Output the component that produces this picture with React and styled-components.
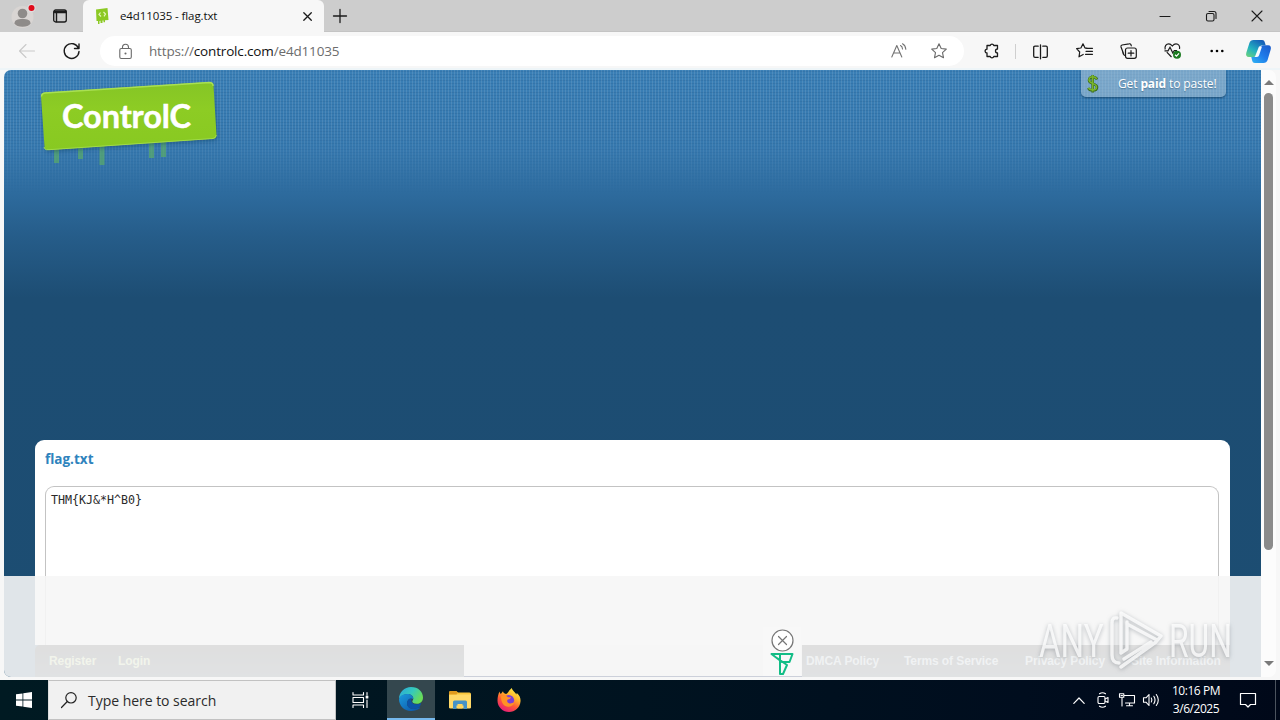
import React from "react";
import styled, { createGlobalStyle, css } from "styled-components";

const ui = '"Open Sans", "Noto Sans", sans-serif';

const GlobalStyle = createGlobalStyle`
  * { box-sizing: border-box; }
  body { margin: 0; background: #f7f7f7; overflow: hidden; font-family: ${ui}; }
  svg { display: block; overflow: visible; }
`;

const Desktop = styled.div`
  width: 1280px;
  height: 720px;
  display: flex;
  flex-direction: column;
`;
const Browser = styled.div`
  height: 680px;
  display: flex;
  flex-direction: column;
  background: #f7f7f7;
`;
const Slot = styled.div`
  width: ${(p) => p.$w}px;
  height: ${(p) => p.$h || 32}px;
  flex: none;
  display: flex;
  align-items: center;
  justify-content: center;
`;
const Spacer = styled.div`
  flex: 1;
`;

/* Tab strip */
const TabStrip = styled.div`
  height: 32px;
  display: flex;
  background: #cdcdcd;
  border-bottom: 1px solid #c4c4c4;
`;
const StripLeft = styled.div`
  width: 83px;
  height: 32px;
  display: flex;
  border-bottom-right-radius: 5px;
  background: #cdcdcd;
`;
const Tab = styled.div`
  width: 241px;
  height: 32px;
  display: flex;
  align-items: center;
  background: #f7f7f7;
  border-radius: 6px 6px 0 0;
  padding-left: 12px;
`;
const TabTitle = styled.span`
  width: 186px;
  padding-left: 11px;
  font-size: 11.5px;
  line-height: 16px;
  letter-spacing: -0.1px;
  color: #111;
  white-space: nowrap;
`;

/* Toolbar */
const Toolbar = styled.div`
  height: 38px;
  display: flex;
  align-items: center;
  background: #f7f7f7;
  border-bottom: 2px solid #eef5f8;
  padding: 2px 0 0 5px;
`;
const AddressBar = styled.div`
  width: 864px;
  height: 30px;
  margin-left: 7px;
  display: flex;
  align-items: center;
  background: #fff;
  border-radius: 15px;
`;
const LockSlot = styled(Slot)`
  padding-left: 8px;
`;
const Url = styled.span`
  width: 726px;
  padding-left: 6px;
  font-size: 13.5px;
  line-height: 20px;
  letter-spacing: -0.16px;
  color: #6d6d6d;
  white-space: nowrap;
  b { color: #111; font-weight: 400; }
`;
const Divider = styled.div`
  width: 1px;
  height: 15px;
  margin-left: -7px;
  background: #cfcfcf;
`;

/* Page */
const Viewport = styled.div`
  height: 607px;
  margin: 0 4px 0 4px;
  display: flex;
  border-radius: 7px;
  overflow: hidden;
  background: #fcfcfc;
`;
const Page = styled.main`
  position: relative;
  width: 1257px;
  height: 607px;
  padding: 0 31px;
  display: flex;
  flex-direction: column;
  background: linear-gradient(#3a7fb6 0, #3678ae 80px, #2e6c9f 120px, #265d8a 165px, #1d4d73 228px, #1c4d72 100%);
  &::before {
    content: "";
    position: absolute;
    inset: 0 0 auto 0;
    height: 125px;
    background:
      repeating-linear-gradient(90deg, rgba(255,255,255,.1) 0 1px, transparent 1px 3px),
      repeating-linear-gradient(0deg, rgba(12,62,110,.13) 0 1px, transparent 1px 3px);
    mask-image: linear-gradient(#000 45%, transparent);
  }
`;
const Header = styled.header`
  position: relative;
  height: 370px;
  display: flex;
  align-items: flex-start;
  justify-content: space-between;
  padding: 9px 4px 0 3px;
`;
const Logo = styled.div`
  position: relative;
  width: 184px;
  height: 92px;
`;
const LogoText = styled.span`
  position: absolute;
  left: 24px;
  top: 16px;
  font: 700 32.5px/42px Lato, sans-serif;
  letter-spacing: -0.1px;
  -webkit-text-stroke: 0.5px #fff;
  color: #fff;
`;
const PaidPill = styled.a`
  width: 145px;
  height: 27px;
  margin-top: -9px;
  display: flex;
  align-items: center;
  padding: 0 0 0 5px;
  gap: 18px;
  border-radius: 0 0 5px 5px;
  background: rgba(185,208,224,.5);
  box-shadow: 0 1px 2px rgba(10,50,85,.65);
  font: 12px/18px ${ui};
  letter-spacing: -0.12px;
  color: #fff;
  white-space: nowrap;
  text-shadow: 0 1px 1px rgba(40,80,110,.5);
`;
const Paste = styled.section`
  width: 1195px;
  height: 205px;
  flex: none;
  padding: 9px 11px 0 10px;
  background: #fff;
  border-radius: 9px 9px 0 0;
`;
const PasteTitle = styled.h1`
  height: 20px;
  margin: 0 0 17px;
  font: 700 13.5px/20px ${ui};
  letter-spacing: 0;
  color: #2e83bd;
`;
const PasteBody = styled.pre`
  height: 159px;
  margin: 0;
  padding: 6px 5px;
  border: 1px solid #c3c3c3;
  border-bottom: 0;
  border-radius: 9px 9px 0 0;
  background: #fff;
  font: 11.65px/15px "DejaVu Sans Mono", monospace;
  color: #2a2a2a;
`;
const Footer = styled.footer`
  width: 1195px;
  height: 32px;
  flex: none;
  display: flex;
  align-items: center;
  padding-bottom: 1px;
  border-top-left-radius: 5px;
  background: linear-gradient(#0a0a0a, #1b2b38);
`;
const FooterLink = styled.a`
  margin-left: ${(p) => p.$gap}px;
  width: ${(p) => p.$w}px;
  font: 700 12px/16px "Liberation Sans", Arial, sans-serif;
  letter-spacing: -0.1px;
  color: ${(p) => (p.$green ? "#c9e08a" : "#b9cad6")};
  white-space: nowrap;
`;
const AdOverlay = styled.div`
  position: absolute;
  inset: 506px 0 0 0;
  background: rgba(246,246,246,.9);
`;
const AdSlot = styled.div`
  position: absolute;
  left: 460px;
  top: 69px;
  width: 338px;
  height: 32px;
  background: #f6f6f6;
  border-bottom: 1px solid #ccd0da;
`;
const AdControls = styled.div`
  position: absolute;
  left: 759px;
  top: 51px;
  width: 38px;
  height: 49px;
  padding-top: 2px;
  display: flex;
  flex-direction: column;
  align-items: center;
  background: #f8f8f8;
`;
const Watermark = styled.div`
  position: absolute;
  left: 1035px;
  top: 539px;
  width: 196px;
  height: 66px;
  display: flex;
  filter: drop-shadow(0 1px 2px rgba(85,95,105,.5));
`;
const MarkText = styled.span`
  width: ${(p) => p.$w}px;
  height: 48px;
  margin-top: 8px;
  font: 400 46px/48px Roboto, sans-serif;
  color: rgba(255,255,255,.78);
  transform: scaleX(${(p) => p.$scale});
  transform-origin: left;
  white-space: nowrap;
`;
const ScrollTrack = styled.div`
  width: 15px;
  display: flex;
  flex-direction: column;
  align-items: center;
  justify-content: space-between;
  padding: 10px 0 11px;
`;
const Thumb = styled.div`
  width: 9px;
  height: 457px;
  margin: 8px 0 auto;
  border-radius: 5px;
  background: #8b8b8b;
`;
const Arrow = styled.div`
  width: 0;
  height: 0;
  border: 5px solid transparent;
  ${(p) =>
    p.$up
      ? css`border-top: 0; border-bottom-color: #7a7a7a;`
      : css`border-bottom: 0; border-top-color: #7a7a7a;`}
`;

/* Taskbar */
const Taskbar = styled.div`
  height: 40px;
  display: flex;
  align-items: center;
  background: linear-gradient(90deg, #001a22, #001320 50%, #000d1e 80%, #000819);
`;
const Search = styled.div`
  width: 288px;
  height: 40px;
  display: flex;
  align-items: center;
  padding-left: 12px;
  gap: 11px;
  background: #f1f1f1;
  border: 1px solid #c2c2c2;
  border-left-color: #ddd;
  font-size: 14px;
  letter-spacing: -0.03px;
  color: #2b2b2b;
`;
const ActiveApp = styled(Slot)`
  background: #34474e;
  border-bottom: 2px solid #76b9ed;
`;
const Clock = styled.div`
  width: 66px;
  display: flex;
  flex-direction: column;
  align-items: center;
  font-size: 12px;
  line-height: 18px;
  letter-spacing: -0.45px;
  color: #fff;
  white-space: nowrap;
`;
const ShowDesktop = styled.div`
  width: 5px;
  height: 40px;
  border-left: 1px solid #4b535e;
`;

const Line = ({ w = 16, h = w, color = "#1b1b1b", sw = 1.1, children }) => (
  <svg width={w} height={h} viewBox={`0 0 ${w} ${h}`} fill="none" stroke={color} strokeWidth={sw} strokeLinecap="round" strokeLinejoin="round">
    {children}
  </svg>
);

const Profile = () => (
  <svg width="24" height="24" viewBox="0 0 24 24">
    <circle cx="11.500" cy="13" r="11" fill="#d9d5d3" />
    <circle cx="11.500" cy="9.500" r="4.800" fill="#8e8b89" />
    <path d="M3.500 19.500c0-3.500 3-4.500 8-4.500s8 1 8 4.500c-1.500 2.300-4 3.300-8 3.300s-6.500-1-8-3.300z" fill="#8e8b89" />
    <circle cx="20.500" cy="4" r="4.200" fill="#dedede" />
    <circle cx="20.500" cy="4" r="3" fill="#e00b1c" />
  </svg>
);
const Favicon = () => (
  <svg width="14" height="16" viewBox="0 0 14 16">
    <path d="M1 1.500 12.500 0 13.500 12 10 12.300v2H8.500v-1.800l-1 .1V15H5.500v-2.200L4.500 13v3H3v-3l-1.500.1z" fill="#8cc924" />
    <path d="M5.500 4.500 4 6.500 6 8.500M8.500 4l2 2-1.500 2.300" fill="none" stroke="#e6f7bd" strokeWidth="1.200" />
  </svg>
);
const Copilot = () => (
  <svg width="25" height="23" viewBox="0 0 25 23">
    <defs>
      <linearGradient id="cpA" x1="0" y1="1" x2=".7" y2="0"><stop stopColor="#71d477" /><stop offset=".45" stopColor="#23b3c0" /><stop offset="1" stopColor="#155fb8" /></linearGradient>
      <linearGradient id="cpB" x1="0" y1="1" x2="1" y2="0"><stop stopColor="#2fb4f4" /><stop offset=".5" stopColor="#1f7bea" /><stop offset="1" stopColor="#1a59c9" /></linearGradient>
    </defs>
    <path d="M7.500 0H16c2 0 2.500 1.300 3 3l.7 2.300h-3.200c-2 0-2.800 1-3.400 2.700l-2 6.300c-.6 1.700-1.500 2.700-3.500 2.700H3c-2.600 0-3.400-2-2.700-4.300L3.400 3C4 1.200 5.500 0 7.500 0z" fill="url(#cpA)" />
    <path d="M17.500 23H9c-2 0-2.500-1.300-3-3l-.7-3h3.200c2 0 2.800-1 3.400-2.700l2-6.300c.6-1.700 1.500-2.700 3.500-2.700H22c2.600 0 3.400 2 2.700 4.300L21.600 20c-.6 1.800-2.100 3-4.100 3z" fill="url(#cpB)" />
    <path d="M13 6.500h3L13.200 15c-.4 1.200-1.200 2-2.200 2H8.800z" fill="#f7fbff" />
  </svg>
);
const Dollar = () => (
  <svg width="14" height="20" viewBox="0 0 14 20" fill="none">
    <path d="M11 5.500C10.300 3.800 8.800 3 7 3 4.500 3 3 4.200 3 6.200c0 4.300 8 2.600 8 7 0 2-1.800 3.300-4.300 3.300-2 0-3.700-.8-4.400-2.500M6.700 1v17.500" stroke="#3a6a1c" strokeWidth="2.600" />
    <path d="M10.500 5C10 3.500 8.800 2.700 7 2.700 4.500 2.700 3 4 3 5.800c0 4.300 7.500 2.800 7.500 7.200 0 2-1.500 3-3.800 3-2 0-3.500-.7-4.200-2.200M6.700 1v16.500" stroke="#7ab52c" strokeWidth="1.500" />
  </svg>
);
const LogoBoard = () => (
  <svg width="184" height="92" viewBox="0 0 184 92">
    <defs>
      <linearGradient id="board" x1="0" y1="0" x2="0" y2="1"><stop stopColor="#85c526" /><stop offset=".4" stopColor="#8dcc24" /><stop offset="1" stopColor="#88c921" /></linearGradient>
      <filter id="soft"><feGaussianBlur stdDeviation="2" /></filter>
      <filter id="dripSoft" x="-20%" width="140%"><feGaussianBlur stdDeviation=".6" /></filter>
    </defs>
    <g stroke="#5fb35f" strokeOpacity=".62" strokeWidth="5" filter="url(#dripSoft)">
      <path d="M18.500 60v24M42.500 60v20M64 60v26" />
      <path d="M113.500 56v23M125.500 56v22" />
    </g>
    <path d="M6 16 171 5q4 0 4.300 3.600L179 57q0 4-3.500 4.300L12 72.500q-4 0-4.300-3.700L4 20q0-3.700 3.500-4z" fill="rgba(15,55,85,.45)" filter="url(#soft)" />
    <path d="M6.500 13.500 171.500 3q3.500 0 4 3.500l3 49.500q0 3.500-3.500 3.700L10.500 71q-3.500 0-4-3.500l-3.500-50q0-3.500 3.500-4z" fill="url(#board)" />
    <path d="M3.500 17.500q0-3 3.500-3.500L171.500 3.500q3.300 0 3.700 3.300" fill="none" stroke="#a9e052" strokeWidth="1.500" />
    <path d="M6 68l1 2q1 1 4 .7L175 59.500q3-.5 3.300-3.500" fill="none" stroke="#a0dc48" strokeWidth="1" />
  </svg>
);
const PlayMark = () => (
  <svg width="62" height="62" viewBox="0 0 62 62" fill="none" stroke="rgba(255,255,255,.78)" strokeWidth="3.400" strokeLinecap="round" strokeLinejoin="round">
    <path d="M10 9Q5 8 5 14V46Q5 54 12 54M14 44V4L54 27M14 44 20 40V13M20 15 50 31M54 27 49 33 14 58M17 50 44 33" />
  </svg>
);
const EdgeIcon = () => (
  <svg width="24" height="24" viewBox="0 0 24 24">
    <defs>
      <linearGradient id="eTop" x1="0" y1="0" x2="1" y2=".5"><stop stopColor="#2aa5dc" /><stop offset=".55" stopColor="#35c9bd" /><stop offset="1" stopColor="#69dc57" /></linearGradient>
      <linearGradient id="eBot" x1="0" y1="0" x2="1" y2="1"><stop stopColor="#1b9bdd" /><stop offset="1" stopColor="#0b50a5" /></linearGradient>
    </defs>
    <path d="M0 12C0 5 5.500 0 12 0c7.500 0 12 5 12 10.500 0 4-2.800 6.300-6.200 6.300-3.300 0-4.500-1.300-4.500-2.300 0-.8 1-1.300 1-3 0-2.300-2.200-4.500-5.800-4.500C4.500 7 1.200 9.500 0 12z" fill="url(#eTop)" />
    <path d="M0 12c1-3.300 4-5 8.500-5 3.600 0 5.800 2.200 5.800 4.500l-.4.6c-2-1.700-5.900.2-5.900 4.100 0 4.800 5 7.500 12 4.300.8-.3 1.300.2.9.8C18.500 23 15.500 24 12 24 5 24 0 18.500 0 12z" fill="url(#eBot)" />
    <path d="M8 16.200c0-3 2.200-4.600 4.600-4.700-1.300 3.600 1.400 5.900 5 5.800 1.800 0 3.400-.5 4.600-1.600-.3 1.700-1 3.400-2.200 4.800C13 23.700 8 21 8 16.200z" fill="#0c53a8" />
  </svg>
);
const FolderIcon = () => (
  <svg width="22" height="19" viewBox="0 0 22 19">
    <path d="M0 1.500Q0 0 1.500 0H7l2.200 1.500H20.500q1.500 0 1.500 1.500v13q0 1-1 1H1q-1 0-1-1z" fill="#f9c63c" />
    <path d="M0 3.500h22V16q0 1.500-1.500 1.500h-19Q0 17.500 0 16z" fill="#ffd968" />
    <path d="M0 1.500Q0 0 1.500 0H7l2 1.500-1.500 2H0z" fill="#e09b1e" />
    <path d="M5.500 9.500h11Q18 9.500 18 11v7h-3.500v-3.500h-7V18H4v-7q0-1.500 1.500-1.500z" fill="#4592c6" />
    <path d="M8.500 13h5v4.500h-5z" fill="#ffd45d" />
  </svg>
);
const FirefoxIcon = () => (
  <svg width="24" height="24" viewBox="0 0 24 24">
    <defs>
      <linearGradient id="ff" x1=".8" y1="0" x2=".25" y2="1"><stop stopColor="#fff04a" /><stop offset=".35" stopColor="#ffb52a" /><stop offset=".62" stopColor="#ff5a36" /><stop offset="1" stopColor="#e5187d" /></linearGradient>
    </defs>
    <path d="M2.500 3.500c.2 1.300.8 2 1.300 2.600L6 3.300c.2 1.400 1.200 2.200 3 2.700C11 5.500 11.500 2.500 14.800 0c.5 3 3.200 3.500 4.500 6.500l.5-1.500c3 2.500 4 5.500 3.700 8.500C23 19.500 18 24 12 24S.5 19 .5 12.700C.5 9 1.300 6 2.500 3.500z" fill="url(#ff)" />
    <circle cx="11.800" cy="12.300" r="5.300" fill="#7b3ed6" />
    <path d="M4 8.500c3-2 5-1.200 7 .8h3c-.5 2-2.500 2-3.500 2.500-.6 1.200-.6 2.700 1.500 3.500 2 .7 3.500-.6 5.300-.5-1 2.700-3.300 4-6 4C7 18.800 4 15 4 8.500z" fill="#ff9225" />
  </svg>
);

const star = "M8 .8l2.200 4.700 5.100.6-3.800 3.500 1 5.100L8 12.200l-4.500 2.500 1-5.100L.7 6.100l5.100-.6z";

export default function App() {
  return (
    <Desktop>
      <GlobalStyle />
      <Browser>
        <TabStrip>
          <StripLeft>
            <Slot $w={45}><Profile /></Slot>
            <Slot $w={30}>
              <Line w={14}>
                <rect x=".7" y="1" width="12.600" height="12" rx="2" strokeWidth="1.300" />
                <path d="M1.500 2.500h11.500M1.500 3.600h11.500M3.500 4v8.500" strokeWidth="1.400" />
              </Line>
            </Slot>
          </StripLeft>
          <Tab>
            <Favicon />
            <TabTitle>e4d11035 - flag.txt</TabTitle>
            <Slot $w={24}><Line w={9} sw={1.3}><path d="M.8.8l7.500 7.500M8.300.8.8 8.300" /></Line></Slot>
          </Tab>
          <Slot $w={32}><Line w={14} sw={1.3}><path d="M7 .5v13M.5 7h13" /></Line></Slot>
          <Spacer />
          <Slot $w={46}><Line w={10} sw={1.1}><path d="M0 5.500h10" /></Line></Slot>
          <Slot $w={46}><Line w={10}><rect x=".5" y="2.500" width="7.500" height="7.500" rx="1.500" /><path d="M3 .5h5q2 0 2 2v5" /></Line></Slot>
          <Slot $w={46}><Line w={10}><path d="M0 0l10 10M10 0 0 10" /></Line></Slot>
        </TabStrip>

        <Toolbar>
          <Slot $w={44}><Line w={16} color="#c9c9c9"><path d="M.5 8h15M7 1.500.5 8 7 14.500" /></Line></Slot>
          <Slot $w={44}><Line w={17} sw={1.4}><path d="M15.500 5.300A7.400 7.400 0 1 0 16 8.500M16 1v4.500h-4.500" /></Line></Slot>
          <AddressBar>
            <LockSlot $w={43}>
              <Line w={13} h={15} color="#6a6a6a"><rect x=".8" y="4.500" width="11.500" height="10" rx="1.500" /><path d="M3.500 4.500V3.300a3 3 0 0 1 6 0v1.200" /><circle cx="6.500" cy="9.500" r=".5" fill="#6a6a6a" /></Line>
            </LockSlot>
            <Url>https://<b>controlc.com</b>/e4d11035</Url>
            <Slot $w={60}>
              <Line w={16} color="#737373"><path d="M.8 14 5.800 2.500 10.800 14M2.500 10h6.600M9.500 2.500q2 1 2 3.500M11.500.8q3 1.500 3.300 5.500" /></Line>
            </Slot>
            <Slot $w={20}><Line w={16} color="#6a6a6a"><path d={star} /></Line></Slot>
          </AddressBar>
          <Slot $w={55}>
            <Line w={16} sw={1.3}><path d="M3 2.500h3.200a1.900 1.900 0 0 1 3.600 0H13.500v3.500a2 2 0 1 0 0 4v3.500H9.800a1.900 1.900 0 0 1-3.600 0H3V10a1.900 1.900 0 1 1 0-3.800z" /></Line>
          </Slot>
          <Slot $w={0}><Divider /></Slot>
          <Slot $w={42}><Line w={15} sw={1.3}><path d="M7.500.8v14M5.200 2.200H2Q.7 2.200.7 3.500V12q0 1.300 1.300 1.300h3.200M9.800 2.200H13q1.300 0 1.300 1.300V12q0 1.300-1.300 1.300H9.800" /></Line></Slot>
          <Slot $w={47}><Line w={17} h={16} sw={1.2}><path d="M11 5.200 9 5 7 .8 4.900 5l-4.300.6L3.700 9 3 13.800 7.200 11.500M9.500 5.300h7M10 8.300h6.500M9.500 11.300h7" /></Line></Slot>
          <Slot $w={41}><Line w={17} h={16} sw={1.2}><rect x="5.500" y="5" width="10.800" height="10.300" rx="2" /><path d="M11 7.500v5.500M8.200 10.200h5.600M3.500 10.500 1 4Q.6 2.500 2 2L9 .8q1.500-.3 2 1l.3 1M5 12.500Q3 12 2.500 8" /></Line></Slot>
          <Slot $w={47}>
            <svg width="17" height="16" viewBox="0 0 17 16" fill="none" stroke="#1b1b1b" strokeWidth="1.200">
              <path d="M1.200 6.500C.3 3 2.300.8 4.800.8 6.500.8 7.500 2 8.300 3c.8-1 1.800-2.200 3.700-2.200 2.500 0 4.200 2.200 3.500 5.200M2.800 9.200 7.500 14M.5 7.800H4L6 4.300 8.800 10l1.500-2.500H13" />
              <circle cx="13" cy="11.800" r="4" fill="#1b7a20" stroke="none" /><path d="M11 11.800l1.500 1.400 2.500-2.800" stroke="#fff" />
            </svg>
          </Slot>
          <Slot $w={41}><svg width="14" height="4"><circle cx="1.700" cy="2" r="1.300" /><circle cx="7" cy="2" r="1.300" /><circle cx="12.300" cy="2" r="1.300" /></svg></Slot>
          <Slot $w={43}><Copilot /></Slot>
        </Toolbar>

        <Viewport>
          <Page>
            <Header>
              <Logo><LogoBoard /><LogoText>ControlC</LogoText></Logo>
              <PaidPill><Dollar /><span>Get <b>paid</b> to paste!</span></PaidPill>
            </Header>
            <Paste>
              <PasteTitle>flag.txt</PasteTitle>
              <PasteBody>{"THM{KJ&*H^B0}"}</PasteBody>
            </Paste>
            <Footer>
              <FooterLink $green $gap={14} $w={47}>Register</FooterLink>
              <FooterLink $green $gap={22} $w={34}>Login</FooterLink>
              <Spacer />
              <FooterLink $gap={0} $w={72}>DMCA Policy</FooterLink>
              <FooterLink $gap={26} $w={95}>Terms of Service</FooterLink>
              <FooterLink $gap={26} $w={80}>Privacy Policy</FooterLink>
              <FooterLink $gap={26} $w={99}>Site Information</FooterLink>
            </Footer>
            <AdOverlay>
              <AdSlot />
              <AdControls>
                <Line w={23} color="#777" sw={1.2}><circle cx="11.500" cy="11.500" r="10.500" fill="#fff" /><path d="M7.500 7.500l8 8M15.500 7.500l-8 8" /></Line>
                <Line w={24} h={23} color="#12bd86" sw={2}><path d="M1.500 2h21L19.500 10H12L1.500 2M10 2v20h3L17 13 7 6" /></Line>
              </AdControls>
            </AdOverlay>
            <Watermark>
              <MarkText $w={68} $scale={0.72}>ANY</MarkText>
              <PlayMark />
              <MarkText $w={66} $scale={0.69}>RUN</MarkText>
            </Watermark>
          </Page>
          <ScrollTrack><Arrow $up /><Thumb /><Arrow /></ScrollTrack>
        </Viewport>
      </Browser>

      <Taskbar>
        <Slot $w={48}>
          <svg width="16" height="16" viewBox="0 0 16 16" fill="#fff"><path d="M0 2.300 6.500 1.400V7.600H0zM7.300 1.300 16 0V7.600H7.300zM0 8.400h6.500v6.200L0 13.700zM7.300 8.400H16V16l-8.700-1.300z" /></svg>
        </Slot>
        <Search>
          <Line w={16} color="#222" sw={1.2}><circle cx="10" cy="5.800" r="5.200" /><path d="M6.300 9.500.5 15.500" /></Line>
          <span>Type here to search</span>
        </Search>
        <Slot $w={49}>
          <Line w={17} h={16} color="#fff" sw={1.1}><path d="M1 .5v2.500h10.500V.5M1 15.500V13h10.500v2.500M1 5.500h10.500v5H1zM15 .5v2M15 8v7.500" /><rect x="14.200" y="4" width="1.600" height="2" fill="#fff" /></Line>
        </Slot>
        <Slot $w={2} />
        <ActiveApp $w={48} $h={40}><EdgeIcon /></ActiveApp>
        <Slot $w={49}><FolderIcon /></Slot>
        <Slot $w={49}><FirefoxIcon /></Slot>
        <Spacer />
        <Slot $w={24}><Line w={12} h={7} color="#fff" sw={1.2}><path d="M.8 6.300 6 1l5.200 5.300" /></Line></Slot>
        <Slot $w={24}><Line w={12} h={16} color="#fff"><rect x="1" y="4.500" width="7" height="7" rx="1.200" /><path d="M8 7l3-1.500v5L8 9M2.500 1.800Q5.500-.2 8.500 1.800M2.500 14.200q3 2 6 0" /></Line></Slot>
        <Slot $w={24}><Line w={16} h={14} color="#fff"><path d="M5.500 2.500h10v7.500h-9M10.500 10v2.500M7.500 12.800h6M3 5v8M.5.800h4.300v3.500H.5zM2 2.500h1.500" /></Line></Slot>
        <Slot $w={24}><Line w={16} h={14} color="#fff"><path d="M.5 4.800h2.500L6 1.500v11L3 9.200H.5zM8.300 5q1.200 2 0 4M10.800 3.300q2.500 3.700 0 7.400M13.300 1.500q4 5.500 0 11" /></Line></Slot>
        <Clock><span>10:16 PM</span><span>3/6/2025</span></Clock>
        <Slot $w={38}><Line w={16} color="#fff" sw={1.2}><path d="M.5 1.500h15v11H10.500L8 15 5.500 12.500H.5z" /></Line></Slot>
        <Slot $w={8} />
        <ShowDesktop />
      </Taskbar>
    </Desktop>
  );
}
